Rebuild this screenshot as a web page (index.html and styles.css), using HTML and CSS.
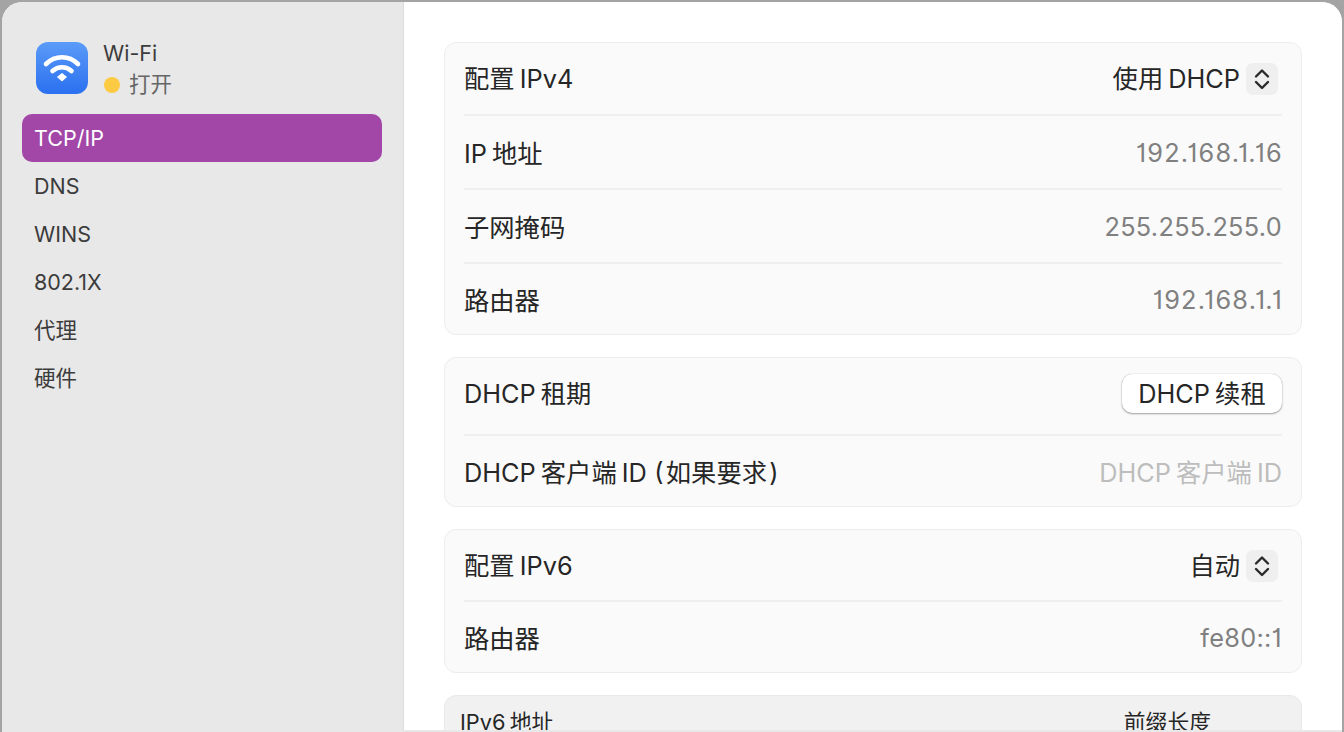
FILE: index.html
```html
<!DOCTYPE html>
<html lang="zh">
<head>
<meta charset="utf-8">
<title>Wi-Fi TCP/IP</title>
<link rel="stylesheet" href="styles.css">
</head>
<body>
<div class="window">
  <aside class="sidebar">
    <div class="head">
      <svg class="app" width="54" height="54" viewBox="0 0 54 54">
        <defs><linearGradient id="g" x1="0" y1="0" x2="0" y2="1"><stop offset="0" stop-color="#5b9bf8"/><stop offset="1" stop-color="#2a70f0"/></linearGradient></defs>
        <rect x="1" y="1" width="52" height="52" rx="12" fill="url(#g)"/>
        <path d="M11 23 C20 14 34 14 43 23" fill="none" stroke="#fff" stroke-width="4.6" stroke-linecap="round"/>
        <path d="M17.500 30 C23 25 31 25 36.500 30" fill="none" stroke="#fff" stroke-width="4.6" stroke-linecap="round"/>
        <path d="M22.500 36 L27 32.500 L31.500 36 L27 40 Z" fill="#fff" stroke="#fff" stroke-linejoin="round"/>
      </svg>
      <div class="head-text">
        <div class="name">Wi-Fi</div>
        <div class="status"><span class="dot"></span>打开</div>
      </div>
    </div>
    <nav class="nav">
      <div class="item active">TCP/IP</div>
      <div class="item">DNS</div>
      <div class="item">WINS</div>
      <div class="item">802.1X</div>
      <div class="item">代理</div>
      <div class="item">硬件</div>
    </nav>
  </aside>
  <main class="content">
    <section class="card">
      <div class="row r-first"><span>配置 IPv4</span><span class="select">使用 DHCP
        <span class="stepper"><svg width="16" height="24" viewBox="0 0 16 24"><path d="M2 9.500 L8 3.500 L14 9.500 M2 15 L8 21 L14 15" fill="none" stroke="#2a2a2a" stroke-width="2.400" stroke-linecap="round" stroke-linejoin="round"/></svg></span></span></div>
      <div class="row"><span>IP 地址</span><span class="value ip">192.168.1.16</span></div>
      <div class="row"><span>子网掩码</span><span class="value">255.255.255.0</span></div>
      <div class="row"><span>路由器</span><span class="value ip">192.168.1.1</span></div>
    </section>
    <section class="card">
      <div class="row lease"><span class="lease-label">DHCP 租期</span><button class="btn">DHCP 续租</button></div>
      <div class="row"><span>DHCP 客户端 ID &#8202;(&#8202;如果要求&#8202;)</span><span class="placeholder">DHCP 客户端 ID</span></div>
    </section>
    <section class="card">
      <div class="row v6"><span>配置 IPv6</span><span class="select">自动
        <span class="stepper"><svg width="16" height="24" viewBox="0 0 16 24"><path d="M2 9.500 L8 3.500 L14 9.500 M2 15 L8 21 L14 15" fill="none" stroke="#2a2a2a" stroke-width="2.400" stroke-linecap="round" stroke-linejoin="round"/></svg></span></span></div>
      <div class="row"><span>路由器</span><span class="value">fe80::1</span></div>
    </section>
    <section class="table">
      <span>IPv6 地址</span><span class="prefix">前缀长度</span>
    </section>
  </main>
</div>
</body>
</html>
```
FILE: styles.css
```css
* { box-sizing: border-box; }
html, body { margin: 0; height: 732px; overflow: hidden; }
body {
  padding: 2px 2px 0;
  background: #a4a4a4;
  font-family: Inter, "Noto Sans CJK SC", sans-serif;
  font-size: 25.3px;
  word-spacing: -2px;
  color: #262626;
}
.window {
  display: flex;
  height: 730px;
  padding-bottom: 2px;
  overflow: hidden;
  border-radius: 20px 20px 0 0;
  background: #e8e8e8;
}
.sidebar {
  flex: 0 0 402px;
  background: #e8e8e8;
  border-right: 1px solid #dcdcdc;
  padding: 38px 21px 0 20px;
}
.head { display: flex; align-items: flex-start; margin-left: 13px; gap: 14px; height: 74px; }
.app { display: block; margin-top: 1px; }
.head-text { display: flex; flex-direction: column; }
.name { font-size: 21.500px; line-height: 27px; color: #3c3c3c; }
.status { display: flex; align-items: center; gap: 9px; font-size: 21.500px; line-height: 33px; color: #666; margin: 1px 0 0 1px; }
.dot { width: 16px; height: 16px; border-radius: 50%; background: #fdcb43; }
.nav { display: flex; flex-direction: column; }
.item { height: 48px; line-height: 48px; padding-left: 12px; font-size: 21.500px; color: #3c3c3c; border-radius: 10px; }
.item.active { background: #a247a7; color: #fff; }
.content {
  flex: 1;
  padding: 40px 40px 0;
  display: flex;
  flex-direction: column;
  gap: 22px;
  background: #fff;
  overflow: hidden;
}
.card {
  flex: none;
  background: #fafafa;
  border: 1px solid #ededed;
  border-radius: 12px;
  padding: 0 19px;
}
.row {
  display: flex;
  justify-content: space-between;
  align-items: center;
  height: 74px;
  border-bottom: 2px solid #efefef;
  white-space: nowrap;
}
.row.r-first { height: 73px; padding-bottom: 3px; }
.row.lease { height: 78px; padding-bottom: 5px; }
.row.v6 { height: 72px; padding-bottom: 3px; }
.row:last-child { border-bottom: 0; height: 70px; }
.lease-label { margin-bottom: 4px; }
.select { display: flex; align-items: center; gap: 6px; padding-right: 4px; }
.stepper {
  display: flex;
  align-items: center;
  justify-content: center;
  width: 32px;
  height: 32px;
  background: #efefef;
  border-radius: 7px;
  transform: translateY(2px);
}
.value { color: #808080; letter-spacing: 0.3px; font-feature-settings: "cv01"; }
.value.ip { letter-spacing: 1.250px; margin-right: -1px; }
.placeholder { color: #bdbdbd; }
.btn {
  font: inherit;
  word-spacing: inherit;
  color: #262626;
  height: 39px;
  width: 160px;
  background: #fff;
  border: 0;
  border-radius: 10px;
  padding: 0 0 3px;
  box-shadow: 0 0 1px #0000004d, 0 1px 2px #00000059;
}
.table {
  flex: none;
  height: 60px;
  background: #f1f1f1;
  border: 1px solid #e8e8e8;
  border-radius: 12px 12px 0 0;
  padding: 11px 15px 0;
  font-size: 21.800px;
  display: flex;
  justify-content: space-between;
  line-height: 30px;
}
.prefix { margin-right: 75px; }
```
